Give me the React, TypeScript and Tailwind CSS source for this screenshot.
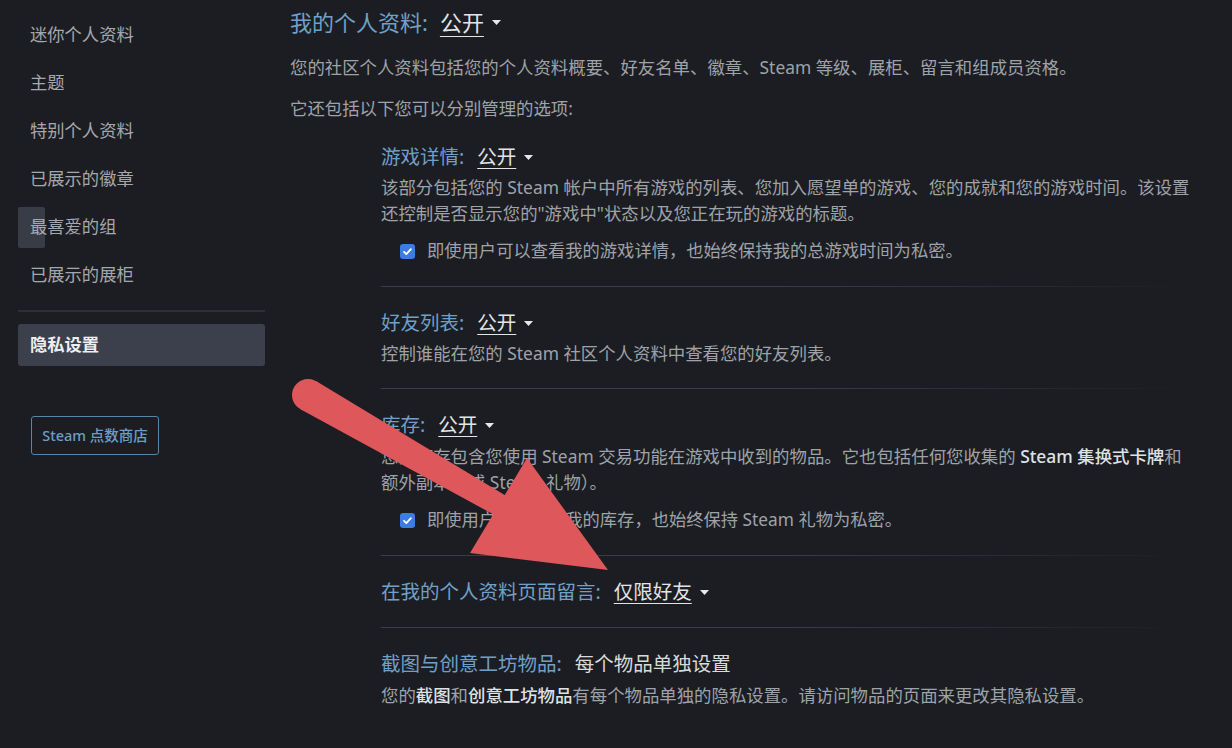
import React from "react";

const font = { fontFamily: '"Noto Sans", "Noto Sans CJK SC", sans-serif' };

const navItems = ["迷你个人资料", "主题", "特别个人资料", "已展示的徽章", "最喜爱的组", "已展示的展柜"];

function Caret() {
  return (
    <svg width="9" height="5" viewBox="0 0 9 5" className="ml-[8px] inline-block align-middle">
      <path d="M0 0h9L4.5 5z" fill="#e6e8ea" />
    </svg>
  );
}

function Check() {
  return (
    <span className="flex h-[15px] w-[15px] shrink-0 items-center justify-center rounded-[3px] bg-[#3b7de3]">
      <svg width="11" height="11" viewBox="0 0 12 12">
        <path d="M2.2 6.3l2.5 2.5 5-5.4" stroke="#fff" strokeWidth="2" fill="none" strokeLinecap="round" strokeLinejoin="round" />
      </svg>
    </span>
  );
}

function Heading({ label, value, caret = true, underline = true }: { label: string; value: string; caret?: boolean; underline?: boolean }) {
  return (
    <div className="flex items-center text-[19.5px] leading-[26px]">
      <span className="text-[#6fa0c9]">{label}:</span>
      <span className={underline ? "ml-[13px] text-[#e2e5e8] underline underline-offset-[4px] decoration-1" : "ml-[13px] text-[#d8dbde]"}>
        {value}
      </span>
      {caret && <Caret />}
    </div>
  );
}

function CheckRow({ children }: { children: React.ReactNode }) {
  return (
    <div className="mt-[12px] flex items-center gap-[12px] pl-[19px] text-[17.3px] leading-[26px] text-[#9ea3a9]">
      <Check />
      <span>{children}</span>
    </div>
  );
}

function Section({ children, last = false }: { children: React.ReactNode; last?: boolean }) {
  return (
    <div className="relative pt-[23px] pb-[23px]">
      {children}
      {!last && (
        <div className="absolute bottom-0 left-0 h-px w-[810px] bg-gradient-to-r from-[#3a3d45] via-[#3a3d45] to-transparent" />
      )}
    </div>
  );
}

export default function App() {
  return (
    <div className="relative h-[748px] w-[1232px] overflow-hidden bg-[#1c1d22]" style={font}>
      <div className="flex">
        {/* sidebar */}
        <div className="w-[272px] shrink-0 pl-[18px] pt-[11px]">
          <div className="w-[247px]">
            {navItems.map((item) => (
              <div key={item} className="relative flex h-12 items-center pl-[12px] text-[17.3px] text-[#a4a8ae]">
                {item === "最喜爱的组" && (
                  <div className="absolute left-0 top-[4px] h-[41px] w-[27px] rounded-[2px] bg-[#383c47]" />
                )}
                <span className="relative">{item}</span>
              </div>
            ))}
            <div className="mt-[11px] h-[2px] bg-[#2c2f35]" />
            <div className="mt-[12px] flex h-[42px] items-center rounded-[3px] bg-[#3c404c] pl-[12px] text-[17.3px] font-semibold text-[#eceef0]">
              隐私设置
            </div>
            <div className="ml-[13px] mt-[50px] flex h-[39px] w-[128px] items-center justify-center rounded-[3px] border border-[#5785ab] text-[14.5px] font-medium text-[#6d9dc6]">
              Steam 点数商店
            </div>
          </div>
        </div>

        {/* main */}
        <div className="flex-1 pl-[18px] pt-[8px]">
          <div className="flex items-center text-[22px] leading-[28px]">
            <span className="text-[#6fa0c9]">我的个人资料:</span>
            <span className="ml-[12px] text-[#e2e5e8] underline underline-offset-[5px] decoration-1">公开</span>
            <Caret />
          </div>
          <p className="mt-[18px] text-[17.4px] leading-[26px] text-[#9ea3a9]">
            您的社区个人资料包括您的个人资料概要、好友名单、徽章、Steam 等级、展柜、留言和组成员资格。
          </p>
          <p className="mt-[15px] text-[17.4px] leading-[26px] text-[#9ea3a9]">它还包括以下您可以分别管理的选项:</p>

          <div className="ml-[91px] w-[830px]">
            <Section>
              <Heading label="游戏详情" value="公开" />
              <p className="mt-[4px] whitespace-nowrap text-[17.4px] leading-[26px] text-[#9ea3a9]">
                该部分包括您的 Steam 帐户中所有游戏的列表、您加入愿望单的游戏、您的成就和您的游戏时间。该设置
                <br />
                还控制是否显示您的"游戏中"状态以及您正在玩的游戏的标题。
              </p>
              <CheckRow>即使用户可以查看我的游戏详情，也始终保持我的总游戏时间为私密。</CheckRow>
            </Section>

            <Section>
              <Heading label="好友列表" value="公开" />
              <p className="mt-[4px] text-[17.4px] leading-[26px] text-[#9ea3a9]">
                控制谁能在您的 Steam 社区个人资料中查看您的好友列表。
              </p>
            </Section>

            <Section>
              <Heading label="库存" value="公开" />
              <p className="mt-[5px] whitespace-nowrap text-[17.4px] leading-[26px] text-[#9ea3a9]">
                您的库存包含您使用 Steam 交易功能在游戏中收到的物品。它也包括任何您收集的{" "}
                <span className="font-medium text-[#dfe2e5]">Steam 集换式卡牌</span>和
                <br />
                额外副本（或 Steam 礼物）。
              </p>
              <CheckRow>即使用户可以查看我的库存，也始终保持 Steam 礼物为私密。</CheckRow>
            </Section>

            <Section>
              <Heading label="在我的个人资料页面留言" value="仅限好友" />
            </Section>

            <Section last>
              <Heading label="截图与创意工坊物品" value="每个物品单独设置" caret={false} underline={false} />
              <p className="mt-[5px] whitespace-nowrap text-[17.4px] leading-[26px] text-[#9ea3a9]">
                您的<span className="font-medium text-[#dfe2e5]">截图</span>和
                <span className="font-medium text-[#dfe2e5]">创意工坊物品</span>
                有每个物品单独的隐私设置。请访问物品的页面来更改其隐私设置。
              </p>
            </Section>
          </div>
        </div>
      </div>

      {/* red annotation arrow drawn over the page */}
      <svg className="pointer-events-none absolute left-0 top-0" width="1232" height="748" viewBox="0 0 1232 748">
        <g fill="#de575b">
          <circle cx="308" cy="395" r="16" />
          <polygon points="300,408.9 316,381.1 515.5,501.5 504.5,520.5" />
          <polygon points="470,553 527,458 608,570" />
        </g>
      </svg>
    </div>
  );
}
